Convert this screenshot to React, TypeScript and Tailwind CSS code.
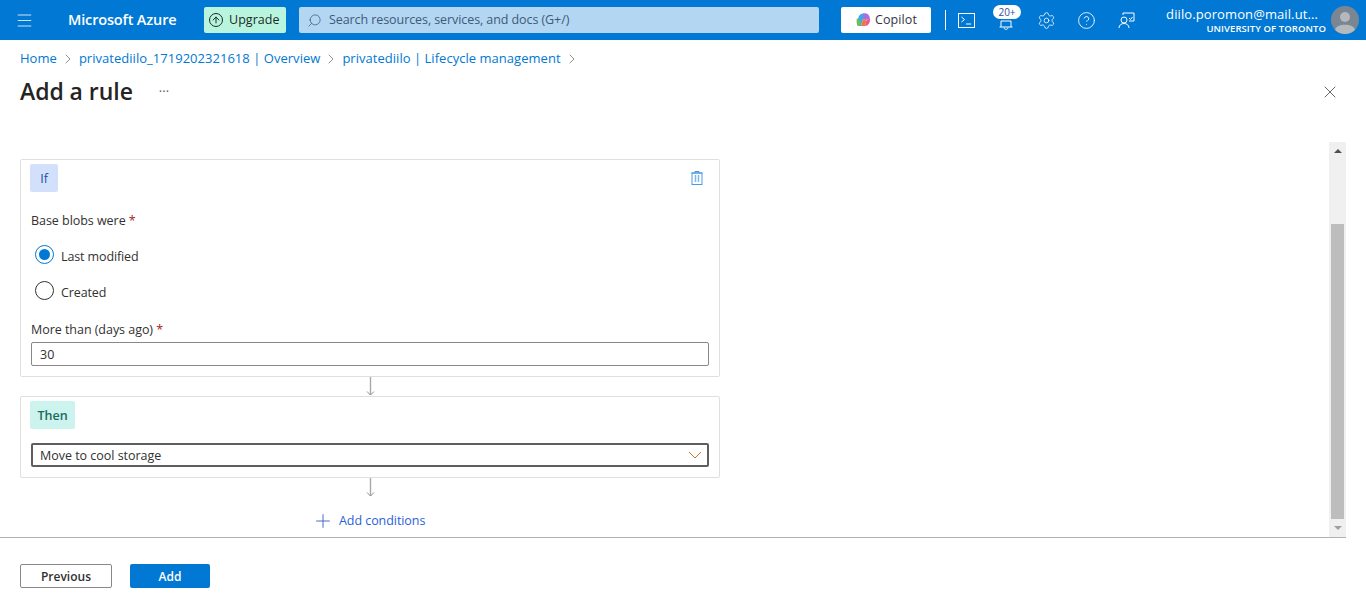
import { ChevronRight, X, Plus, Menu, Search, ArrowUp, Settings, CircleHelp } from "lucide-react";

const font = { fontFamily: "'Open Sans', 'Noto Sans', sans-serif" };

function TopBar() {
  return (
    <header className="flex h-10 items-center bg-[#0078d4] text-white">
      <div className="flex w-[48px] justify-center">
        <Menu size={19} strokeWidth={1.3} className="text-[#cfe4f6]" />
      </div>
      <div className="ml-5 w-[136px] text-[14.5px] font-semibold tracking-[-0.15px]">Microsoft Azure</div>
      <div className="flex h-[26px] w-[82px] items-center gap-[6px] rounded-[2px] bg-[#b9f5de] pl-[5px] text-[12.5px] font-medium tracking-[0.05px] text-[#1a2b28]">
        <span className="flex h-[14px] w-[14px] items-center justify-center rounded-full border border-[#1a2b28]">
          <ArrowUp size={10} strokeWidth={2.4} />
        </span>
        Upgrade
      </div>
      <div className="ml-[13px] flex h-[26px] w-[520px] items-center rounded-[2px] bg-[#b3d6f2] pl-2 text-[12.5px] tracking-[-0.08px] text-[#3f5a78]">
        <Search size={15} strokeWidth={1.2} className="mr-[7px] -scale-x-100 text-[#3b5b85]" />
        Search resources, services, and docs (G+/)
      </div>
      <div className="ml-[22px] flex h-[26px] w-[90px] items-center justify-center gap-[4px] rounded-[2px] bg-white text-[12.5px] font-medium tracking-[0.1px] text-[#33344a]">
        <svg width="16" height="16" viewBox="0 0 16 16">
          <path d="M3 8.500C3 4.500 5 1.500 8 1.500h3l-3 6-2 6.500H4C2 14 1 11 3 8.500z" fill="#3fa8e8" />
          <path d="M8 1.500h3c2 0 3.500 2 4 5l-4 1.500L8 7.500z" fill="#a86edb" />
          <path d="M6 14l2-6.500 3.500 1L10 14z" fill="#f0763a" />
          <path d="M2 6c1 2 2 3 4 3l-1 5H4C2 14 1 9 2 6z" fill="#6cc24a" />
          <path d="M10 14l1.500-6 3.500-1.500c.5 4-2 7.500-5 7.500z" fill="#e85a8e" />
        </svg>
        Copilot
      </div>
      <div className="ml-[14px] h-5 w-px bg-white" />
      <div className="ml-3 flex h-[15px] w-[17px] items-end border border-white px-[2px] pb-[1px]">
        <svg width="11" height="11" viewBox="0 0 11 11" fill="none" stroke="white" strokeWidth="1">
          <path d="M0.500 2l3 2.500-3 2.500M5 9h5" />
        </svg>
      </div>
      <div className="relative ml-[23px] h-5 w-4">
        <svg width="16" height="20" viewBox="0 0 16 20" fill="none" stroke="white" strokeWidth="1" className="absolute left-0 top-[2px]">
          <path d="M3 15V9h10v6M1.500 15h13M6 15.500c0 2.500 4 2.500 4 0" />
        </svg>
        <span className="absolute -left-[5px] -top-[5px] flex h-[14px] w-[28px] items-center justify-center rounded-full bg-white text-[10px] text-[#33509a]">20+</span>
      </div>
      <Settings size={19} strokeWidth={1} className="ml-[23px]" />
      <CircleHelp size={19} strokeWidth={1.1} className="ml-[21px]" />
      <svg width="17" height="17" viewBox="0 0 17 17" fill="none" stroke="white" strokeWidth="1" className="ml-[22px]">
        <path d="M5 3V1h11v8h-5" />
        <path d="M11 6l1.500 1.500L14.500 5" />
        <circle cx="6" cy="8" r="3" />
        <path d="M1 16c0-6 10-6 10 0" />
      </svg>
      <div className="ml-[31px] flex w-[160px] flex-col items-end">
        <span className="mr-[8px] text-[13px] leading-[18px] tracking-[0.1px]">diilo.poromon@mail.ut...</span>
        <span className="text-[9.500px] font-semibold leading-[12px] tracking-[0.08px]">UNIVERSITY OF TORONTO</span>
      </div>
      <div className="ml-[5px] flex h-7 w-7 items-center justify-center overflow-hidden rounded-full bg-[#7a8793]">
        <svg width="28" height="28" viewBox="0 0 28 28" fill="#b4b9bd">
          <circle cx="14" cy="11" r="5" />
          <path d="M4 24c1-7 19-7 20 0v4H4z" />
        </svg>
      </div>
    </header>
  );
}

function Breadcrumb() {
  const items = ["Home", "privatediilo_1719202321618 | Overview", "privatediilo | Lifecycle management"];
  return (
    <nav className="ml-5 flex h-[37px] items-center text-[13px] tracking-[0.03px] text-[#0078d4]">
      {items.map((label) => (
        <span key={label} className="flex items-center">
          {label}
          <ChevronRight size={16} strokeWidth={1} className="mx-[3px] text-[#605e5c]" />
        </span>
      ))}
    </nav>
  );
}

function Tag({ label, className }: { label: string; className: string }) {
  return (
    <div className={"-ml-px flex h-7 items-center justify-center rounded-[2px] pt-[2px] text-[12.5px] " + className}>{label}</div>
  );
}

function Radio({ label, checked }: { label: string; checked?: boolean }) {
  return (
    <div className="flex h-9 items-center text-[12.5px] tracking-[-0.12px] text-[#323130]">
      <span className={"mb-[4px] ml-[4px] mr-[7px] flex h-[19px] w-[19px] items-center justify-center rounded-full border " + (checked ? "border-[#0078d4]" : "border-[#323130]")}>
        {checked && <span className="h-[11px] w-[11px] rounded-full bg-[#0078d4]" />}
      </span>
      <span className="mt-[2px]">{label}</span>
    </div>
  );
}

function Connector() {
  return (
    <div className="flex h-[19px] w-[700px] justify-center">
      <svg width="9" height="19" viewBox="0 0 9 19" fill="none" stroke="#8f8f8f" strokeWidth="1">
        <path d="M4.500 0v18" stroke="#a8a8a8" strokeWidth="1.400" />
        <path d="M1 14.500l3.500 3.500 3.500-3.500" />
      </svg>
    </div>
  );
}

export default function App() {
  return (
    <div className="h-[607px] w-[1366px] overflow-hidden bg-white" style={font}>
      <TopBar />
      <Breadcrumb />
      <div className="ml-5 flex h-[28px] items-center">
        <h1 className="text-[23px] font-semibold tracking-[-0.05px] text-[#252423]">Add a rule</h1>
        <span className="ml-[26px] mt-[2px] text-[13px] text-[#605e5c]">···</span>
        <X size={20} strokeWidth={0.9} className="ml-auto mr-[26px] mt-[2px] text-[#323130]" />
      </div>

      <div className="mt-[37px] flex h-[396px] w-[1346px] border-b border-[#b3b0ad]">
        <div className="flex-1 pl-5 pt-[17px]">
          <section className="h-[218px] w-[700px] rounded-[2px] border border-[#e1dfdd] px-[10px] pt-1">
            <div className="flex items-start justify-between">
              <Tag label="If" className="w-7 bg-[#d3e0fb] font-medium text-[#1a4fa0]" />
              <svg width="12" height="14" viewBox="0 0 12 14" fill="none" className="mr-[6px] mt-[7px]">
                <path d="M0.500 2h11M4 2V0.500h4V2" stroke="#4a90d9" />
                <rect x="1" y="2" width="10" height="11.500" stroke="#4a9be0" />
                <path d="M4.500 4v7M7.500 4v7" stroke="#7db8ea" strokeWidth="1.500" />
              </svg>
            </div>
            <div className="mt-[20px] h-[18px] text-[12.5px] leading-[18px] tracking-[-0.04px] text-[#323130]">
              Base blobs were <span className="text-[#a4262c]">*</span>
            </div>
            <div className="mt-[8px]">
              <Radio label="Last modified" checked />
              <Radio label="Created" />
            </div>
            <div className="mt-[11px] h-[18px] text-[12.5px] leading-[18px] tracking-[-0.04px] text-[#323130]">
              More than (days ago) <span className="text-[#a4262c]">*</span>
            </div>
            <div className="mt-[3px] flex h-6 items-center rounded-[2px] border border-[#8a8886] pl-2 pt-[2px] text-[12.5px] text-[#323130]">30</div>
          </section>
          <Connector />
          <section className="h-[82px] w-[700px] rounded-[2px] border border-[#e1dfdd] px-[10px] pt-1">
            <Tag label="Then" className="w-[45px] bg-[#cdf3ee] font-semibold text-[#1a6b5c]" />
            <div className="mt-[14px] flex h-6 items-center justify-between rounded-[2px] border-2 border-[#605e5c] pl-[7px] pr-[5px] text-[12.5px] tracking-[-0.02px] text-[#323130]">
              <span className="mt-[2px]">Move to cool storage</span>
              <svg width="14" height="8" viewBox="0 0 14 8" fill="none" stroke="#c8752d" strokeWidth="1">
                <path d="M1 1l6 6 6-6" />
              </svg>
            </div>
          </section>
          <Connector />
          <div className="ml-[292px] mt-[13px] flex items-center text-[12.5px] tracking-[-0.06px] text-[#2b5fd9]">
            <Plus size={22} strokeWidth={1} className="mr-[5px] text-[#3a5fc8]" />
            Add conditions
          </div>
        </div>

        <div className="flex w-[17px] flex-col items-center bg-[#f0f0f0]">
          <div className="flex h-[17px] items-center justify-center">
            <div className="h-0 w-0 border-x-[4px] border-b-[4px] border-x-transparent border-b-[#505050]" />
          </div>
          <div className="mt-[65px] h-[295px] w-[13px] bg-[#bdbdbd]" />
          <div className="flex h-[17px] items-center justify-center">
            <div className="h-0 w-0 border-x-[4px] border-t-[4px] border-x-transparent border-t-[#a0a0a0]" />
          </div>
        </div>
      </div>

      <div className="ml-5 mt-[26px] flex gap-[18px] text-[12px] font-semibold">
        <button className="h-6 w-[92px] rounded-[2px] border border-[#8a8886] bg-white pt-[2px] text-[#323130]">Previous</button>
        <button className="h-6 w-20 rounded-[2px] bg-[#0078d4] pt-[2px] text-white">Add</button>
      </div>
    </div>
  );
}
